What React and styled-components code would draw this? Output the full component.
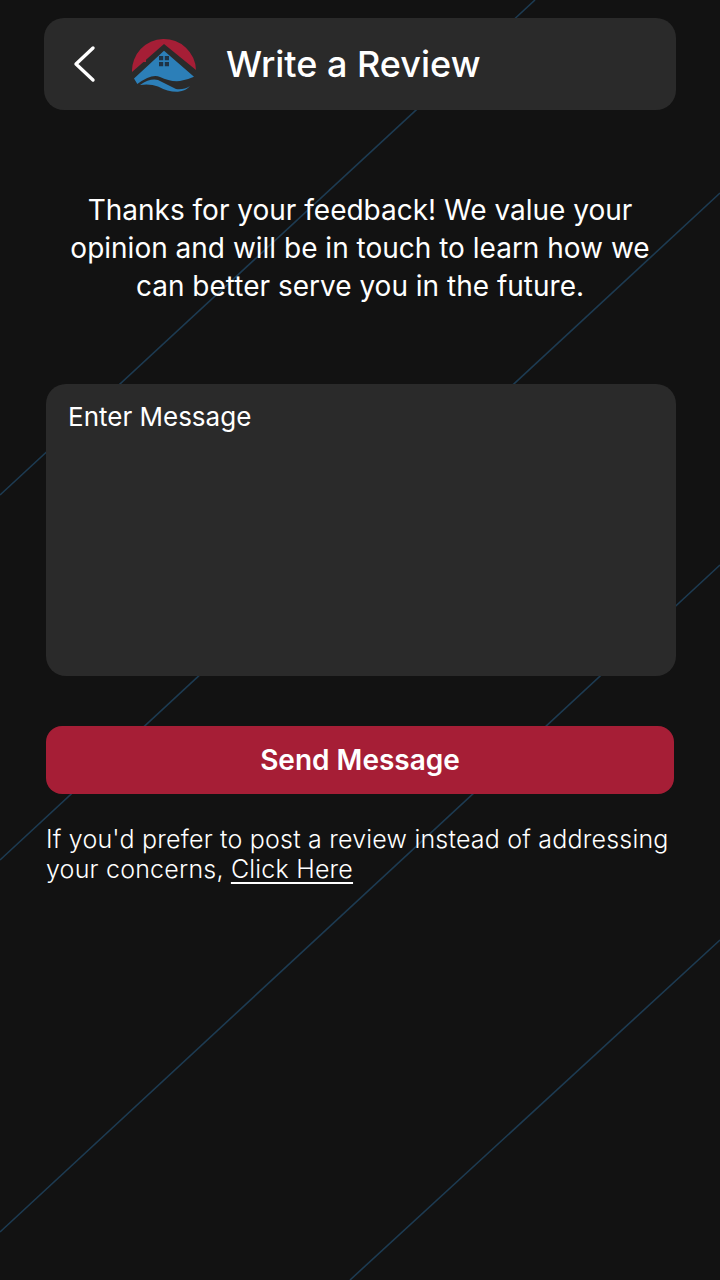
import React from 'react';
import styled, { createGlobalStyle } from 'styled-components';

const Global = createGlobalStyle`
  html, body { margin: 0; padding: 0; background: #121212; }
  * { box-sizing: border-box; }
`;

const Page = styled.div`
  position: relative;
  width: 720px;
  height: 1280px;
  overflow: hidden;
  background: #121212;
  font-family: Inter, "Liberation Sans", sans-serif;
  color: #fff;
`;

const Backdrop = styled.svg`
  position: absolute;
  inset: 0;
  width: 720px;
  height: 1280px;
`;

const Content = styled.main`
  position: relative;
  display: flex;
  flex-direction: column;
  padding: 18px 44px 0 44px;
`;

const Header = styled.header`
  display: flex;
  align-items: center;
  height: 92px;
  background: #2a2a2a;
  border-radius: 20px;
  padding-left: 28px;
`;

const BackIcon = styled.svg`
  width: 24px;
  height: 38px;
  flex: none;
`;

const Logo = styled.svg`
  width: 64px;
  height: 56px;
  flex: none;
  margin-left: 36px;
`;

const Title = styled.h1`
  margin: 0 0 0 30px;
  font-size: 36px;
  line-height: 44px;
  font-weight: 500;
`;

const Intro = styled.p`
  margin: 81px 0 0 0;
  padding: 0 8px;
  font-size: 28px;
  line-height: 38px;
  font-weight: 400;
  text-align: center;
`;

const MessageBox = styled.div`
  margin: 79px 0 0 2px;
  height: 292px;
  background: #2a2a2a;
  border-radius: 20px;
  padding: 17px 22px;
  font-size: 26px;
  line-height: 32px;
`;

const SendButton = styled.button`
  display: block;
  width: 628px;
  height: 68px;
  margin: 50px 0 0 2px;
  border: 0;
  border-radius: 16px;
  background: #a61e36;
  color: #fff;
  font-family: inherit;
  font-size: 28px;
  font-weight: 600;
`;

const Note = styled.p`
  margin: 30px 0 0 2px;
  font-size: 25px;
  line-height: 30px;
  font-weight: 300;
  letter-spacing: 0.2px;
`;

const NoteLink = styled.a`
  color: #fff;
  text-decoration: underline;
  text-underline-offset: 4px;
  text-decoration-thickness: 2px;
`;

const lines = [
  [0, 495, 535, 0],
  [0, 860, 720, 193],
  [0, 1232, 720, 565],
  [350, 1280, 720, 940],
];

export default function App() {
  return (
    <Page>
      <Global />
      <Backdrop viewBox="0 0 720 1280">
        {lines.map(([x1, y1, x2, y2]) => (
          <line key={y1} x1={x1} y1={y1} x2={x2} y2={y2} stroke="#1d3b52" strokeWidth="1.6" />
        ))}
      </Backdrop>
      <Content>
        <Header>
          <BackIcon viewBox="0 0 24 38">
            <path d="M21 3 L4 19 L21 35" fill="none" stroke="#fff" strokeWidth="3.4" strokeLinecap="round" strokeLinejoin="round" />
          </BackIcon>
          <Logo viewBox="0 0 64 56">
            <path d="M0 36 A32 32 0 1 1 64 34 L32 8 Z" fill="#a61e36" />
            <path d="M9 26 V21 H14 V26 Z" fill="#a61e36" />
            <path d="M2 42.5 L32 14.7 L62 40.7 Q55 44 48 45 Q38 46 28 41 Q20 37 5.3 48 Z" fill="#2c7fb8" />
            <path d="M8 49 Q18 42 26 44 Q36 49 44 53 Q52 54 58 50 Q54 55 46 55.7 Q36 56 26 50.5 Q18 47.5 8 49 Z" fill="#2c7fb8" />
            <path d="M27 20 h4.2 v4.2 h-4.2 Z M32.8 20 h4.2 v4.2 h-4.2 Z M27 26 h4.2 v4.2 h-4.2 Z M32.8 26 h4.2 v4.2 h-4.2 Z" fill="#1f3345" />
          </Logo>
          <Title>Write a Review</Title>
        </Header>
        <Intro>Thanks for your feedback! We value your opinion and will be in touch to learn how we can better serve you in the future.</Intro>
        <MessageBox>Enter Message</MessageBox>
        <SendButton>Send Message</SendButton>
        <Note>
          If you'd prefer to post a review instead of addressing your concerns, <NoteLink href="#">Click Here</NoteLink>
        </Note>
      </Content>
    </Page>
  );
}
